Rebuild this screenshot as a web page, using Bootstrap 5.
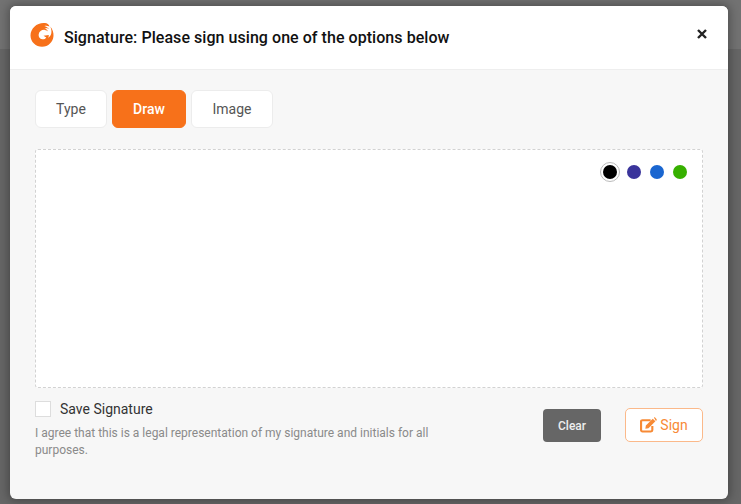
<!DOCTYPE html>
<html lang="en"><head><meta charset="utf-8"><title>Signature</title>
<link rel="stylesheet" href="https://cdn.jsdelivr.net/npm/bootstrap@5.3.0/dist/css/bootstrap.min.css">
<style>
html,body{height:504px;overflow:hidden}
body{background:linear-gradient(#727272 0 49px,#666 49px);font-family:Roboto,sans-serif;padding:6px 13px 5px 10px}
.sig-modal{height:493px;background:#f7f7f7;border:0;border-radius:6px;box-shadow:0 0 10px 2px rgba(0,0,0,.3);overflow:hidden}
.sig-head{height:64px;background:#fff;border-bottom:1px solid #eee;padding:0 21px 7px 20px;border-radius:0}
.sig-title{font-size:16px;font-weight:500;color:#111;margin:7px 0 0 10px;line-height:20px;letter-spacing:.05px}
.sig-main{padding:20px 25px 0}
.sig-tab{height:38px;padding:0;font-size:14px;background:#fff;border:1px solid #ececec;border-radius:6px;color:#555;line-height:36px}
.sig-tab.tw1{width:72px}.sig-tab.tw2{width:74px}.sig-tab.tw3{width:82px}
.sig-tab.sig-on,.sig-tab.sig-on:hover{background:#f7711a;border-color:#f7711a;color:#fff;font-weight:500}
.sig-pad{height:239px;margin-top:21px;background:#fff;border:1px dashed #d2d2d2;border-radius:3px;padding:15px 15px 0 0}
.sig-dot{width:14px;height:14px;border-radius:50%;display:block;margin-left:9px}
.sig-dot.sel{outline:1px solid #bbb;outline-offset:2px;margin-right:0;transform:translateX(-1px)}
.sig-k{background:#000}.sig-i{background:#3a349b}.sig-b{background:#1a66d0}.sig-g{background:#36b000}
.sig-foot{margin-top:11px}
.sig-left{width:420px}
.sig-box{width:16px;height:16px;background:#fff;border:1px solid #ddd;flex:none}
.sig-lab{font-size:14px;color:#333;margin-left:9px;line-height:20px}
.sig-note{font-size:12px;color:#8a8a8a;line-height:17px;margin:6px 0 0}
.sig-clear,.sig-clear:hover{width:58px;height:33px;padding:0;background:#666;border:0;border-radius:4px;color:#eee;font-size:12px;font-weight:500;margin:1px 24px 0 0}
.sig-sign,.sig-sign:hover{width:78px;height:34px;padding:0;background:#fff;border:1px solid #fbb98a;border-radius:5px;color:#f78a35;font-size:14px;line-height:1}
.sig-btns{margin-top:9px}
.sig-pen{margin-right:3px}
</style></head>
<body>
<div class="modal-content sig-modal">
  <div class="d-flex align-items-center justify-content-between sig-head">
    <div class="d-flex align-items-center">
      <svg width="24" height="25" viewBox="0 0 24 25" aria-hidden="true"><path fill="#f7711a" d="M15 1C7.500.2.500 6 .5 13.500.5 20 6 24.800 12 24.800c6.500 0 11-5 11.500-10.800.3-3.500-1-7-3.300-9.500 1.200 2.500 1.600 5 1 7.300-.5 1.700-1.500 3-3 3.900.5-1 .7-1.900.6-2.800l-5.300.8 2.800 1.700c-1 1.500-2.500 2.200-4.100 1.900-2.500-.4-4-2.700-3.500-5.100.5-2.900 3.300-4.700 6.100-4.300 1.300.2 2.500.7 3.500 1.600-1-1.600-2.300-2.800-3.800-3.500 1.700-.2 3.300.2 4.800 1.200-1.300-1.700-3-2.800-5-3.300 1.700-.5 3.500-.3 5.200.6C18.900 2.300 17 1.300 15 1z"/></svg>
      <h5 class="sig-title">Signature: Please sign using one of the options below</h5>
    </div>
    <button type="button" class="btn p-0 border-0 d-flex" aria-label="Close"><svg width="10" height="10" viewBox="0 0 10 10"><path d="M1 1l8 8M9 1L1 9" stroke="#222" stroke-width="2.400" fill="none"/></svg></button>
  </div>
  <div class="sig-main">
    <div class="d-flex" style="gap:5px">
      <button type="button" class="btn sig-tab tw1">Type</button>
      <button type="button" class="btn sig-tab tw2 sig-on">Draw</button>
      <button type="button" class="btn sig-tab tw3">Image</button>
    </div>
    <div class="sig-pad d-flex justify-content-end align-items-start">
      <span class="sig-dot sig-k sel"></span><span class="sig-dot sig-i"></span><span class="sig-dot sig-b"></span><span class="sig-dot sig-g"></span>
    </div>
    <div class="d-flex justify-content-between align-items-start sig-foot">
      <div class="sig-left">
        <div class="d-flex align-items-center"><span class="sig-box"></span><span class="sig-lab">Save Signature</span></div>
        <p class="sig-note">I agree that this is a legal representation of my signature and initials for all purposes.</p>
      </div>
      <div class="d-flex align-items-start sig-btns">
        <button type="button" class="btn sig-clear">Clear</button>
        <button type="button" class="btn sig-sign d-flex align-items-center justify-content-center"><svg class="sig-pen" width="17" height="16" viewBox="0 0 16 15" aria-hidden="true"><path fill="none" stroke="#f78a35" stroke-width="2" d="M10 3H2.300A1.300 1.300 0 0 0 1 4.300v8a1.300 1.300 0 0 0 1.300 1.300h8a1.300 1.300 0 0 0 1.300-1.300V8.500"/><path fill="#f78a35" d="M5.500 8 12 1.500 14.500 4 8 10.500l-3 .5zM13 .5l1-.2 1.700 1.700v1L15 3.800z"/></svg>Sign</button>
      </div>
    </div>
  </div>
</div>
</body></html>
